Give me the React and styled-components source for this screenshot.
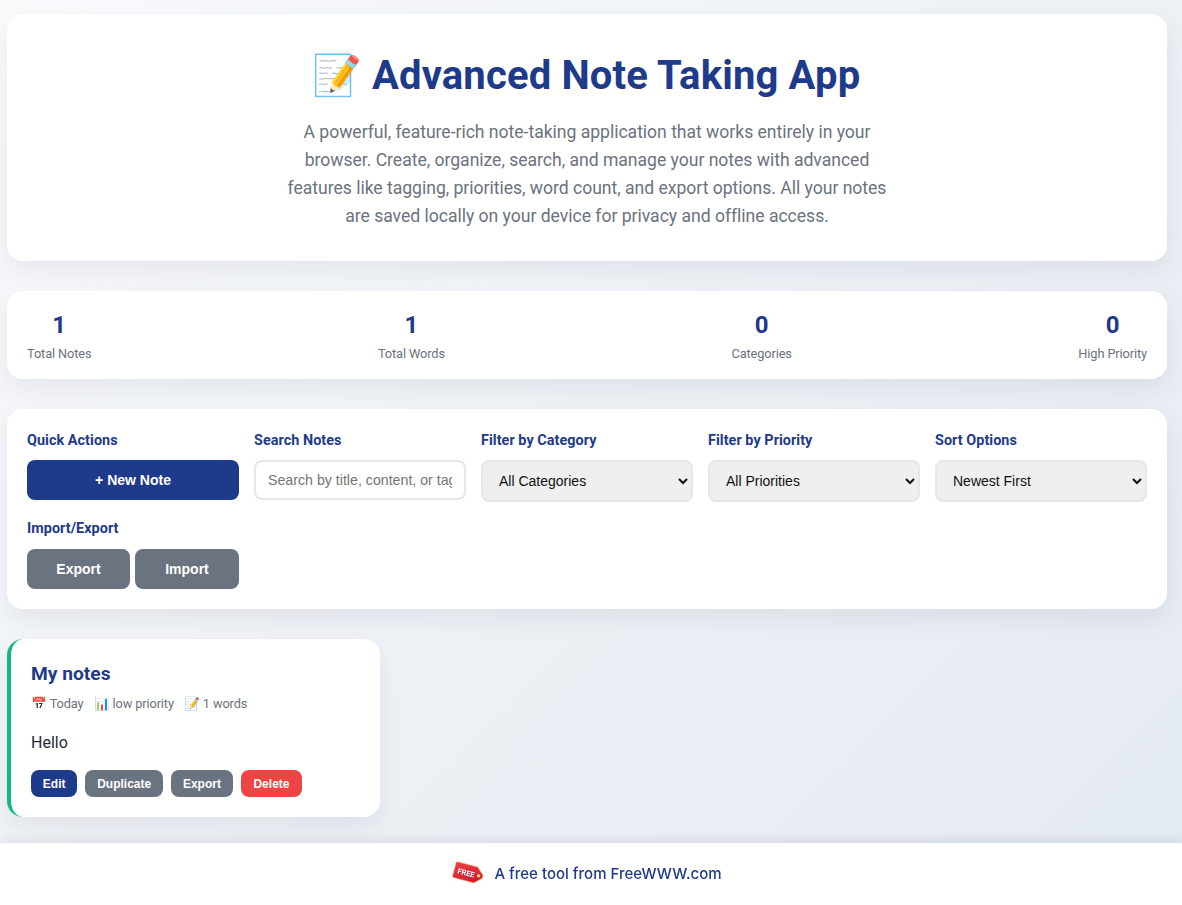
import React from 'react';
import styled, { createGlobalStyle } from 'styled-components';

const GlobalStyle = createGlobalStyle`
  * {
    box-sizing: border-box;
  }
  html, body {
    margin: 0;
    padding: 0;
  }
  body {
    height: 905px;
    overflow: hidden;
    font-family: Roboto, "Liberation Sans", sans-serif;
    color: #1f2937;
    background: linear-gradient(135deg, #f8fafc 0%, #e2e8f0 108%);
  }
`;

const Page = styled.div`
  width: 1160px;
  margin-left: 7px;
  padding-top: 14px;
  display: flex;
  flex-direction: column;
  gap: 30px;
`;

const Panel = styled.section`
  background: #fff;
  border-radius: 16px;
  box-shadow: 0 10px 25px rgba(10, 20, 50, 0.065);
`;

const Header = styled(Panel)`
  height: 247px;
  padding-top: 33px;
  text-align: center;
`;

const Title = styled.h1`
  margin: 0 0 13px;
  padding-right: 2px;
  font-size: 40px;
  line-height: 58px;
  font-weight: 700;
  letter-spacing: 0.16px;
  color: #1e3a8a;
`;

const Intro = styled.p`
  margin: 0 auto;
  width: 604px;
  font-size: 17.6px;
  line-height: 28px;
  letter-spacing: -0.03px;
  color: #6b7280;
`;

const Stats = styled(Panel)`
  height: 88px;
  padding: 20px;
  display: flex;
  justify-content: space-between;
`;

const Stat = styled.div`
  text-align: center;
`;

const StatValue = styled.div`
  font-size: 24px;
  line-height: 28px;
  font-weight: 700;
  color: #1e3a8a;
`;

const StatLabel = styled.div`
  margin-top: 5px;
  font-size: 12.8px;
  line-height: 20px;
  letter-spacing: -0.12px;
  color: #6b7280;
`;

const Controls = styled(Panel)`
  height: 200px;
  padding: 20px;
  display: grid;
  grid-template-columns: repeat(5, 212px);
  grid-template-rows: 88px 1fr;
  column-gap: 15px;
`;

const Group = styled.div`
  display: flex;
  flex-direction: column;
`;

const Label = styled.label`
  display: block;
  height: 20px;
  margin: 0 0 11px;
  font-size: 14.4px;
  line-height: 23px;
  font-weight: 700;
  letter-spacing: 0.05px;
  color: #1e3a8a;
`;

const Button = styled.button`
  flex: ${({ $grow }) => $grow || 1} 1 0;
  height: 40px;
  border: 0;
  border-radius: 8px;
  font-family: "Liberation Sans", Arial, sans-serif;
  font-size: 14px;
  font-weight: 700;
  color: #fff;
  background: ${({ $tone }) => ($tone === 'gray' ? '#6b7280' : '#1e3a8a')};
`;

const ButtonRow = styled.div`
  display: flex;
  gap: 5px;
  margin-top: ${({ $offset }) => $offset || 0}px;
`;

const SearchInput = styled.input`
  width: 100%;
  height: 40px;
  padding: 0 12px;
  border: 2px solid #e5e7eb;
  border-radius: 8px;
  outline: 0;
  background: #fff;
  font-family: "Liberation Sans", Arial, sans-serif;
  font-size: 14.2px;
  &::placeholder {
    color: #757575;
  }
`;

const Select = styled.select`
  width: 100%;
  height: 42px;
  padding: 0 12px;
  border: 2px solid #e5e7eb;
  border-radius: 8px;
  background: #efefef;
  color: #111;
  font-family: "Liberation Sans", Arial, sans-serif;
  font-size: 14px;
`;

const NotesGrid = styled.div`
  display: grid;
  grid-template-columns: repeat(3, 1fr);
  gap: 20px;
`;

const NoteCard = styled(Panel)`
  height: 178px;
  padding: 21px 20px 20px;
  border-left: 4px solid #10b981;
`;

const NoteTitle = styled.h3`
  margin: 0 0 6px;
  font-size: 19.2px;
  line-height: 28px;
  font-weight: 700;
  color: #1e3a8a;
`;

const NoteMeta = styled.div`
  display: flex;
  gap: 10px;
  font-size: 12.8px;
  line-height: 20px;
  letter-spacing: -0.12px;
  color: #6b7280;
`;

const NoteBody = styled.p`
  margin: 17px 0 15px;
  font-size: 16px;
  line-height: 24px;
  color: #1f2937;
`;

const NoteActions = styled.div`
  display: flex;
  gap: 8px;
`;

const SmallButton = styled.button`
  height: 27px;
  padding: 0 ${({ $tone }) => ($tone === 'red' ? 12.7 : 11.85)}px;
  border: 0;
  border-radius: 8px;
  font-family: "Liberation Sans", Arial, sans-serif;
  font-size: 12px;
  font-weight: 700;
  color: #fff;
  background: ${({ $tone }) =>
    $tone === 'red' ? '#ef4444' : $tone === 'gray' ? '#6b7280' : '#1e3a8a'};
`;

const Footer = styled.footer`
  position: fixed;
  left: 0;
  right: 0;
  bottom: 0;
  height: 62px;
  display: flex;
  align-items: center;
  justify-content: center;
  gap: 9px;
  padding: 0 8px 2px 0;
  background: #fff;
  box-shadow: 0 -2px 10px rgba(0, 0, 0, 0.1);
  font-family: Inter, Roboto, sans-serif;
  font-size: 15.04px;
  font-weight: 500;
  color: #1e3a8a;
`;

const TagIcon = () => (
  <svg width="33" height="26" viewBox="0 0 33 26" aria-hidden="true">
    <defs>
      <linearGradient id="tagFill" x1="0" y1="0" x2="1" y2="1">
        <stop offset="0" stopColor="#ef3f45" />
        <stop offset="1" stopColor="#c9122f" />
      </linearGradient>
    </defs>
    <g transform="rotate(15 16 13)">
      <path
        d="M2 6.5a1.5 1.5 0 0 1 1.5-1.5H24l7 6.5v3L24 21H3.500A1.500 1.500 0 0 1 2 19.500z"
        fill="url(#tagFill)"
        stroke="#f08a3c"
        strokeWidth="0.6"
      />
      <circle cx="27" cy="13" r="1.7" fill="#f8cf6a" />
      <text x="5.500" y="16" fontFamily="Roboto, sans-serif" fontSize="7.500" fontWeight="700" fill="#fff">
        FREE
      </text>
    </g>
  </svg>
);

const stats = [
  ['1', 'Total Notes'],
  ['1', 'Total Words'],
  ['0', 'Categories'],
  ['0', 'High Priority'],
];

const App = () => {
  return (
    <>
      <GlobalStyle />
      <Page>
        <Header>
          <Title>📝 Advanced Note Taking App</Title>
          <Intro>
            A powerful, feature-rich note-taking application that works entirely in your browser.
            Create, organize, search, and manage your notes with advanced features like tagging,
            priorities, word count, and export options. All your notes are saved locally on your
            device for privacy and offline access.
          </Intro>
        </Header>
        <Stats>
          {stats.map(([value, label]) => (
            <Stat key={label}>
              <StatValue>{value}</StatValue>
              <StatLabel>{label}</StatLabel>
            </Stat>
          ))}
        </Stats>
        <Controls>
          <Group>
            <Label>Quick Actions</Label>
            <ButtonRow>
              <Button>+ New Note</Button>
            </ButtonRow>
          </Group>
          <Group>
            <Label>Search Notes</Label>
            <SearchInput placeholder="Search by title, content, or tags..." />
          </Group>
          <Group>
            <Label>Filter by Category</Label>
            <Select defaultValue="all">
              <option value="all">All Categories</option>
            </Select>
          </Group>
          <Group>
            <Label>Filter by Priority</Label>
            <Select defaultValue="all">
              <option value="all">All Priorities</option>
            </Select>
          </Group>
          <Group>
            <Label>Sort Options</Label>
            <Select defaultValue="newest">
              <option value="newest">Newest First</option>
            </Select>
          </Group>
          <Group>
            <Label>Import/Export</Label>
            <ButtonRow $offset={1}>
              <Button $tone="gray" $grow={0.99}>Export</Button>
              <Button $tone="gray">Import</Button>
            </ButtonRow>
          </Group>
        </Controls>
        <NotesGrid>
          <NoteCard>
            <NoteTitle>My notes</NoteTitle>
            <NoteMeta>
              <span>📅 Today</span>
              <span>📊 low priority</span>
              <span>📝 1 words</span>
            </NoteMeta>
            <NoteBody>Hello</NoteBody>
            <NoteActions>
              <SmallButton>Edit</SmallButton>
              <SmallButton $tone="gray">Duplicate</SmallButton>
              <SmallButton $tone="gray">Export</SmallButton>
              <SmallButton $tone="red">Delete</SmallButton>
            </NoteActions>
          </NoteCard>
        </NotesGrid>
      </Page>
      <Footer>
        <TagIcon />
        A free tool from FreeWWW.com
      </Footer>
    </>
  );
};

export default App;
